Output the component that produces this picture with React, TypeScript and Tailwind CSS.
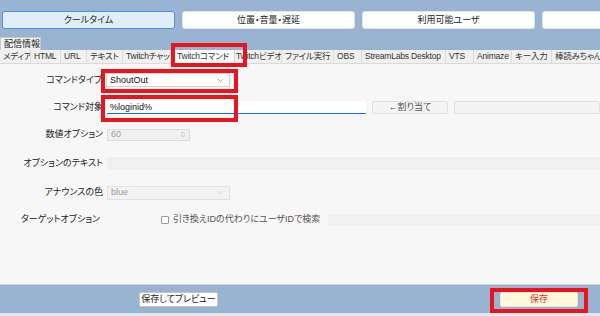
import { ChevronDown, ChevronUp } from "lucide-react";

const TABS: { label: string; w: number }[] = [
  { label: "メディア", w: 31 },
  { label: "HTML", w: 30 },
  { label: "URL", w: 26 },
  { label: "テキスト", w: 36 },
  { label: "Twitchチャット", w: 48 },
  { label: "Twitchコマンド", w: 64 },
  { label: "Twitchビデオ", w: 47 },
  { label: "ファイル実行", w: 52 },
  { label: "OBS", w: 28 },
  { label: "StreamLabs Desktop", w: 84 },
  { label: "VTS", w: 28 },
  { label: "Animaze", w: 38 },
  { label: "キー入力", w: 40 },
  { label: "棒読みちゃん", w: 60 },
];

const TOP = ["クールタイム", "位置・音量・遅延", "利用可能ユーザ", "その他"];

function Label({ text, w = 101 }: { text: string; w?: number }) {
  return (
    <div
      className="shrink-0 text-right pr-[4px] text-[#222] whitespace-nowrap"
      style={{ width: w }}
    >
      {text}
    </div>
  );
}

export default function App() {
  return (
    <div className="relative w-[600px] h-[316px] overflow-hidden bg-[#99b4d1] flex flex-col text-[9px] leading-none font-['Liberation_Sans','Noto_Sans_CJK_JP',sans-serif] [font-feature-settings:'palt']">
      {/* top buttons */}
      <div className="flex gap-[7px] pl-[2px] pt-[11px] h-[37px] shrink-0">
        {TOP.map((t, i) => (
          <div
            key={t}
            className={`w-[173px] h-[18px] shrink-0 rounded-[3px] flex items-center justify-center text-[#222] ${
              i === 0
                ? "bg-[#e1edf9] border border-[#4f92d6]"
                : "bg-white border border-[#dde5ee]"
            }`}
          >
            {i < 3 ? t : ""}
          </div>
        ))}
      </div>

      {/* group tab */}
      <div className="h-[13px] shrink-0 flex">
        <div className="w-[41px] h-[13px] bg-[#f0f0f0] border border-b-0 border-[#c9c9c9] flex items-center pl-[3px] text-[#222]">
          配信情報
        </div>
      </div>

      {/* tab strip */}
      <div className="h-[14px] shrink-0 flex bg-[#f0f0f0] border-b border-[#dadada] overflow-hidden text-[8.5px] tracking-[-0.2px]">
        {TABS.map((t) => {
          const sel = t.label === "Twitchコマンド";
          return (
            <div
              key={t.label}
              className={`shrink-0 h-full flex items-center overflow-hidden whitespace-nowrap text-[#333] ${
                sel
                  ? "bg-white justify-center border-x border-[#d6d6d6]"
                  : t.label === "Twitchビデオ"
                    ? "pl-[1px] border-r border-[#dcdcdc]"
                    : "pl-[3px] border-r border-[#dcdcdc]"
              }`}
              style={{ width: t.w }}
            >
              {t.label}
            </div>
          );
        })}
      </div>

      {/* content */}
      <div className="flex-1 bg-[#f7f7f7] flex flex-col pt-[2px]">
        <div className="h-[28px] flex items-center">
          <Label text="コマンドタイプ" w={106} />
          <div className="w-[124px] h-[14px] bg-white border border-[#d4d4d4] flex items-center justify-between pl-[3px] pr-[4px] text-[#111]">
            ShoutOut
            <ChevronDown size={9} strokeWidth={1.5} className="text-[#666]" />
          </div>
        </div>

        <div className="h-[27px] flex items-center">
          <Label text="コマンド対象" w={107} />
          <div className="w-[259px] h-[13px] bg-white border-b border-[#1f6fd0] flex items-center pl-[3px] text-[#111]">
            %loginid%
          </div>
          <div className="ml-[6px] w-[76px] h-[13px] bg-[#f4f4f4] border border-[#e1e1e1] rounded-[2px] flex items-center justify-center text-[#555]">
            ←割り当て
          </div>
          <div className="ml-[6px] flex-1 h-[13px] bg-[#f4f4f4] border border-[#e1e1e1] rounded-[2px]" />
        </div>

        <div className="h-[27px] flex items-center">
          <Label text="数値オプション" w={107} />
          <div className="w-[83px] h-[12px] bg-[#f0f0f0] border border-[#dcdcdc] flex items-center justify-between pl-[3px] pr-[3px] text-[#a0a0a0]">
            60
            <div className="flex flex-col -space-y-[3px] text-[#999]">
              <ChevronUp size={6} strokeWidth={2} />
              <ChevronDown size={6} strokeWidth={2} />
            </div>
          </div>
        </div>

        <div className="h-[30px] flex items-center">
          <Label text="オプションのテキスト" w={107} />
          <div className="flex-1 h-[13px] bg-[#f0f0f0]" />
        </div>

        <div className="h-[29px] flex items-center">
          <Label text="アナウンスの色" w={107} />
          <div className="w-[123px] h-[14px] bg-[#f3f3f3] border border-[#e2e2e2] flex items-center justify-between pl-[3px] pr-[4px] text-[#9a9a9a]">
            blue
            <ChevronDown size={9} strokeWidth={1.2} className="text-[#aaa]" />
          </div>
        </div>

        <div className="h-[25px] flex items-center">
          <Label text="ターゲットオプション" w={104} />
          <div className="ml-[57px] w-[8px] h-[8px] border border-[#999] rounded-[1px] bg-white shrink-0" />
          <div className="ml-[4px] text-[#555] whitespace-nowrap">
            引き換えIDの代わりにユーザIDで検索
          </div>
          <div className="ml-[8px] flex-1 h-[12px] bg-[#f0f0f0]" />
        </div>
      </div>

      {/* footer */}
      <div className="h-[29px] shrink-0 bg-[#99b4d1] border-t border-[#c8d4e1] flex items-center">
        <div className="ml-[139px] w-[79px] h-[15px] bg-white border border-[#c5c5c5] rounded-[2px] flex items-center justify-center text-[#222]">
          保存してプレビュー
        </div>
        <div className="ml-[282px] w-[78px] h-[15px] bg-[#fff8dc] border border-[#f0e6c8] rounded-[2px] flex items-center justify-center text-[#e03030]">
          保存
        </div>
      </div>
      <div className="h-[3px] shrink-0 bg-[#e3e8ee]" />

      {/* annotation boxes */}
      <div className="absolute left-[171px] top-[43px] w-[76px] h-[24px] border-[4px] border-[#e8151d]" />
      <div className="absolute left-[101px] top-[69px] w-[137px] h-[24px] border-[4px] border-[#e8151d]" />
      <div className="absolute left-[101px] top-[95px] w-[137px] h-[27px] border-[4px] border-[#e8151d]" />
      <div className="absolute left-[490px] top-[288px] w-[98px] h-[25px] border-[4px] border-[#e8151d]" />
    </div>
  );
}
